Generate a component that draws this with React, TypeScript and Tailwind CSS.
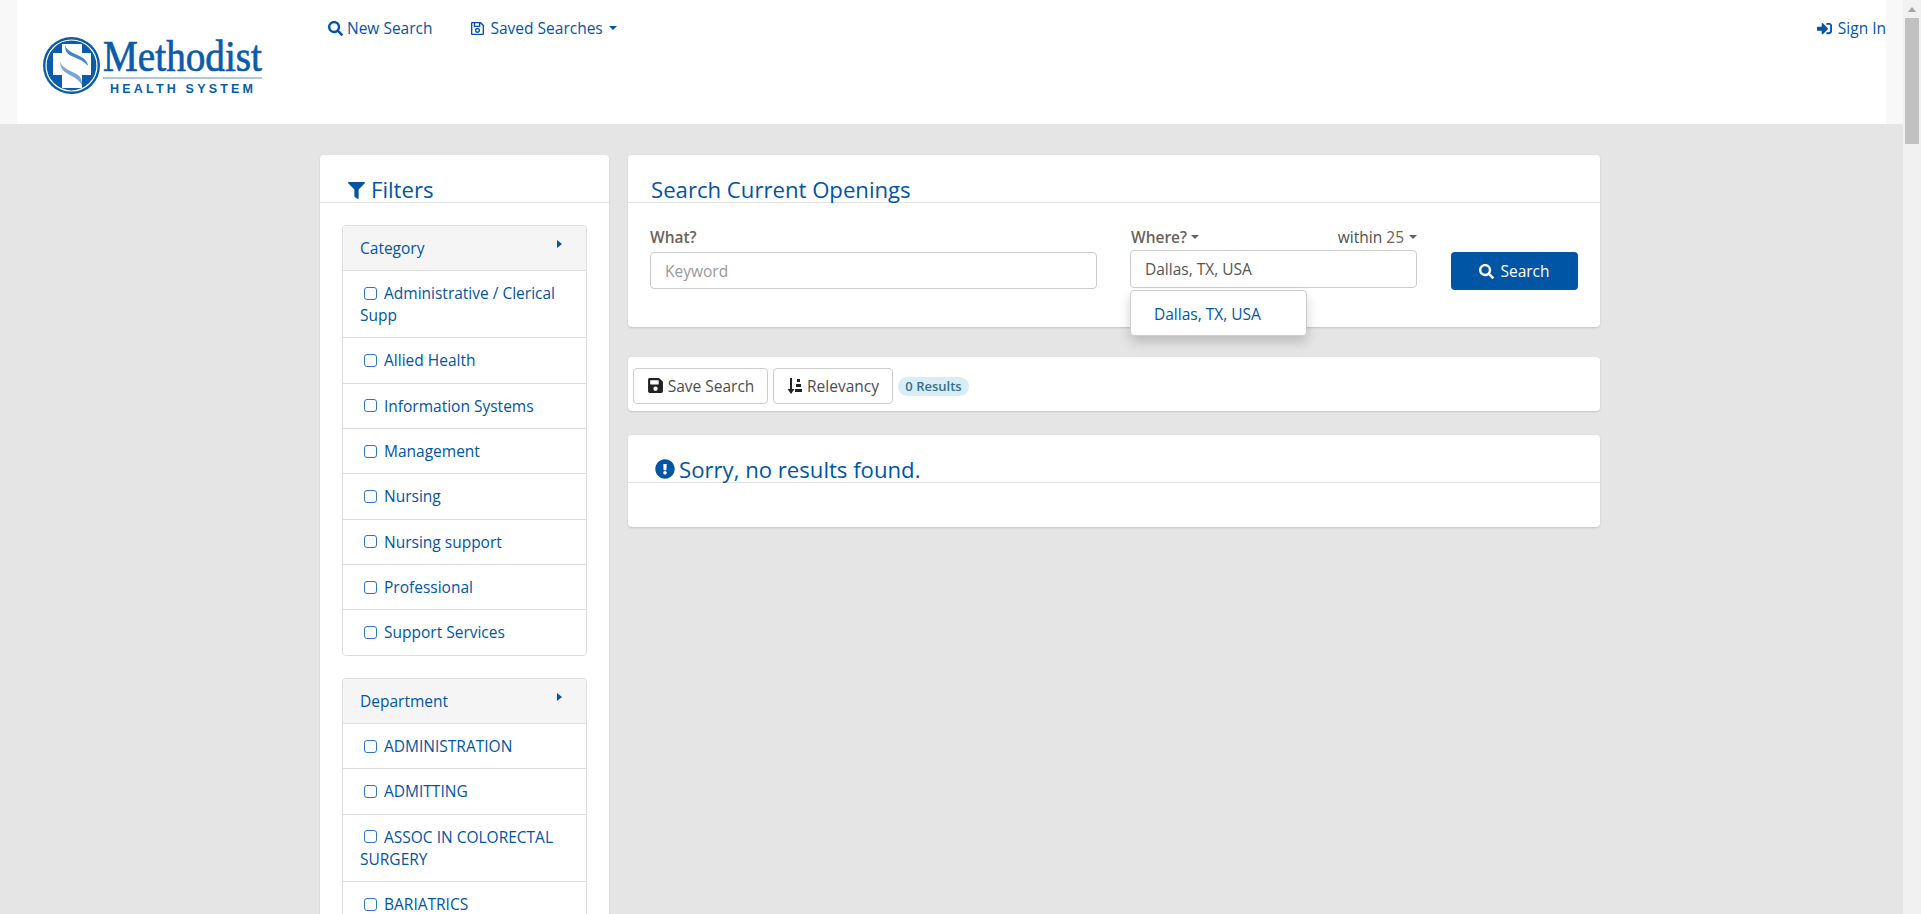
import { FaSearch, FaRegSave, FaSave, FaFilter, FaExclamationCircle, FaSignInAlt } from 'react-icons/fa';

const CATEGORIES = [
  'Administrative / Clerical Supp',
  'Allied Health',
  'Information Systems',
  'Management',
  'Nursing',
  'Nursing support',
  'Professional',
  'Support Services',
];

const DEPARTMENTS = ['ADMINISTRATION', 'ADMITTING', 'ASSOC IN COLORECTAL SURGERY', 'BARIATRICS', 'BEHAVIORAL HEALTH'];

function Logo() {
  return (
    <svg width="230" height="80" viewBox="0 0 230 80" className="block overflow-visible">
      <circle cx="31.5" cy="35.5" r="28.5" fill="#0a5cab" />
      <circle cx="31.5" cy="35.5" r="25.5" fill="none" stroke="#fff" strokeWidth="1.2" />
      <path d="M22 14h20v9h9v22h-9v13H22V45h-9V23h9z" fill="#fff" />
      <path d="M25 15c2 7 12 9 18 13 3 2 5 5 5 8-4-6-14-8-20-12-2-2-3-5-3-9z" fill="#0a5cab" opacity="0.75" />
      <path d="M20 32c3 7 12 9 18 13 3 2 4 6 4 10-3-6-11-9-17-13-3-2-5-6-5-10z" fill="#0a5cab" opacity="0.55" />
      <text x="63" y="41" fontFamily="'Liberation Serif', serif" fontWeight="400" fontSize="44" fill="#0a5cab" stroke="#0a5cab" strokeWidth="0.7" textLength="159" lengthAdjust="spacingAndGlyphs">
        Methodist
      </text>
      <rect x="63" y="47" width="159" height="2" fill="#a9c9e4" />
      <text x="70" y="63" fontFamily="'Liberation Sans', sans-serif" fontWeight="700" fontSize="12.5" fill="#0a5cab" textLength="143">
        HEALTH SYSTEM
      </text>
    </svg>
  );
}

function Caret({ className }: { className: string }) {
  return <span className={`inline-block w-0 h-0 border-x-[4px] border-x-transparent border-t-[4px] ${className}`} />;
}

function FilterGroup({ title, items, clip }: { title: string; items: string[]; clip?: boolean }) {
  return (
    <div className={`border border-[#ddd] rounded-[4px] ${clip ? '' : 'mb-[22.5px]'}`}>
      <div className="h-[45px] bg-[#f5f5f5] border-b border-[#ddd] pl-[17px] pr-[24px] flex justify-between items-start pt-[11px] rounded-t-[4px]">
        <span className="leading-[22px]">{title}</span>
        <span className="mt-[3px] w-0 h-0 border-y-[4.5px] border-y-transparent border-l-[5px] border-l-[#0055a5]" />
      </div>
      {items.map((item, i) => (
        <div key={item} className={`px-[17px] py-[11.17px] leading-[22px] ${i < items.length - 1 ? 'border-b border-[#ddd]' : ''}`}>
          <span className="inline-block w-[13.5px] h-[13px] ml-[3.5px] mr-[7px] -mb-[0.5px] border-[1.5px] border-[#0055a5] rounded-[3px] opacity-80" />
          {item}
        </div>
      ))}
    </div>
  );
}

function Scrollbar() {
  return (
    <div className="w-[18px] shrink-0 h-full bg-[#f1f1f1] flex flex-col items-center">
      <div className="h-[18px] flex items-center justify-center">
        <span className="w-0 h-0 border-x-[4.5px] border-x-transparent border-b-[5px] border-b-[#a3a3a3]" />
      </div>
      <div className="w-[14px] h-[126px] bg-[#c1c1c1]" />
    </div>
  );
}

export default function App() {
  return (
    <div className="h-[914px] flex overflow-hidden bg-[#e5e5e5] font-['Open_Sans',sans-serif] text-[15.5px] text-[#0055a5]">
      <div className="w-[1903px] shrink-0 h-full overflow-hidden">
        <div className="h-[124px] bg-[#f8f8f8] px-[17px]">
          <div className="w-[1869px] h-full bg-white flex">
            <div className="w-[23px]" />
            <div className="w-[288px] pt-[30px]">
              <Logo />
            </div>
            <nav className="flex-1 flex items-start pt-[17px] leading-[22px]">
              <a className="flex items-center">
                <FaSearch className="w-[15px] h-[15px] mr-[4px]" />
                New Search
              </a>
              <a className="flex items-center ml-[37px]">
                <FaRegSave className="w-[15px] h-[15px] mr-[6px]" />
                Saved Searches
                <Caret className="ml-[6px] border-t-[#0055a5]" />
              </a>
              <a className="flex items-center ml-auto">
                <FaSignInAlt className="w-[15px] h-[15px] mr-[6px]" />
                Sign In
              </a>
            </nav>
          </div>
        </div>

        <div className="pl-[320px] pt-[31px] flex items-start gap-[19px]">
          <aside className="w-[289px] shrink-0 bg-white rounded-[4px] shadow-[0_1px_2px_rgba(0,0,0,0.12)]">
            <div className="h-[48px] border-b border-[#e4e4e4] pl-[28px] flex items-end">
              <h2 className="text-[22.15px] leading-[26px] flex items-center">
                <FaFilter className="w-[17px] h-[17px] mr-[6px] mt-[3px]" />
                Filters
              </h2>
            </div>
            <div className="px-[22px] pt-[22px]">
              <FilterGroup title="Category" items={CATEGORIES} />
              <FilterGroup title="Department" items={DEPARTMENTS} clip />
            </div>
          </aside>

          <main className="w-[972px] shrink-0">
            <section className="h-[172px] bg-white rounded-[4px] shadow-[0_1px_2px_rgba(0,0,0,0.15)]">
              <div className="h-[48px] border-b border-[#e4e4e4] pl-[23px] flex items-end">
                <h1 className="text-[22.15px] leading-[26px]">Search Current Openings</h1>
              </div>
              <div className="flex pl-[22px] pt-[23px]">
                <div className="w-[447px]">
                  <label className="block font-semibold text-[#6b6259] leading-[22px] mb-[4px]">What?</label>
                  <div className="h-[37px] border border-[#ccc] rounded-[4px] px-[14px] leading-[37px] text-[#999]">Keyword</div>
                </div>
                <div className="w-[287px] ml-[33px] relative">
                  <div className="flex justify-between leading-[22px] mb-[2px] text-[#4d4d4d]">
                    <span className="font-semibold flex items-center pl-[1px] text-[#6b6259]">
                      Where?
                      <Caret className="ml-[4px] border-t-[#6b6259]" />
                    </span>
                    <span className="flex items-center">
                      within&nbsp;<span className="text-[#6b6259]">25</span>
                      <Caret className="ml-[5px] border-t-[#6b6259]" />
                    </span>
                  </div>
                  <div className="h-[38px] border border-[#ccc] rounded-[4px] px-[14px] leading-[37px] text-[#555]">Dallas, TX, USA</div>
                  <div className="absolute left-0 top-[64px] w-[177px] h-[46px] bg-white border border-[#ccc] rounded-[4px] pl-[23px] leading-[46px] shadow-[0_6px_12px_rgba(0,0,0,0.18)]">
                    Dallas, TX, USA
                  </div>
                </div>
                <button className="ml-[34px] mt-[26px] w-[127px] h-[38px] pt-[1px] bg-[#0055a5] rounded-[4px] text-white flex items-center justify-center">
                  <FaSearch className="w-[15px] h-[15px] mr-[6px]" />
                  Search
                </button>
              </div>
            </section>

            <section className="mt-[30px] h-[54px] bg-white rounded-[4px] shadow-[0_1px_2px_rgba(0,0,0,0.15)] flex items-start pt-[11px] pl-[5px] text-[#4d4d4d]">
              <button className="w-[135px] h-[36px] pt-[1px] border border-[#ccc] rounded-[4px] flex items-center justify-center">
                <FaSave className="w-[17px] h-[17px] mr-[4px] -mt-[2px] text-[#222]" />
                Save Search
              </button>
              <button className="w-[120px] h-[36px] pt-[1px] ml-[5px] border border-[#ccc] rounded-[4px] flex items-center justify-center">
                <svg width="16" height="16" viewBox="0 0 16 16" className="mr-[4px] -mt-[2px] text-[#222]" fill="currentColor">
                  <path d="M3 0h2v11h2.5L4 16 .5 11H3z" />
                  <rect x="10" y="1" width="3" height="3" />
                  <rect x="9" y="6" width="5" height="3" />
                  <rect x="8" y="11" width="7" height="3" />
                </svg>
                Relevancy
              </button>
              <span className="ml-[5px] mt-[9px] w-[71px] h-[19px] rounded-full bg-[#d9edf7] text-[#31708f] text-[13px] font-semibold leading-[19px] text-center">
                0 Results
              </span>
            </section>

            <section className="mt-[24px] h-[92px] bg-white rounded-[4px] shadow-[0_1px_2px_rgba(0,0,0,0.15)]">
              <div className="h-[48px] border-b border-[#e4e4e4] pl-[27px] flex items-end">
                <h2 className="text-[22.15px] leading-[26px] flex items-center">
                  <FaExclamationCircle className="w-[20px] h-[20px] mr-[4px]" />
                  Sorry, no results found.
                </h2>
              </div>
            </section>
          </main>
        </div>
      </div>
      <Scrollbar />
    </div>
  );
}
